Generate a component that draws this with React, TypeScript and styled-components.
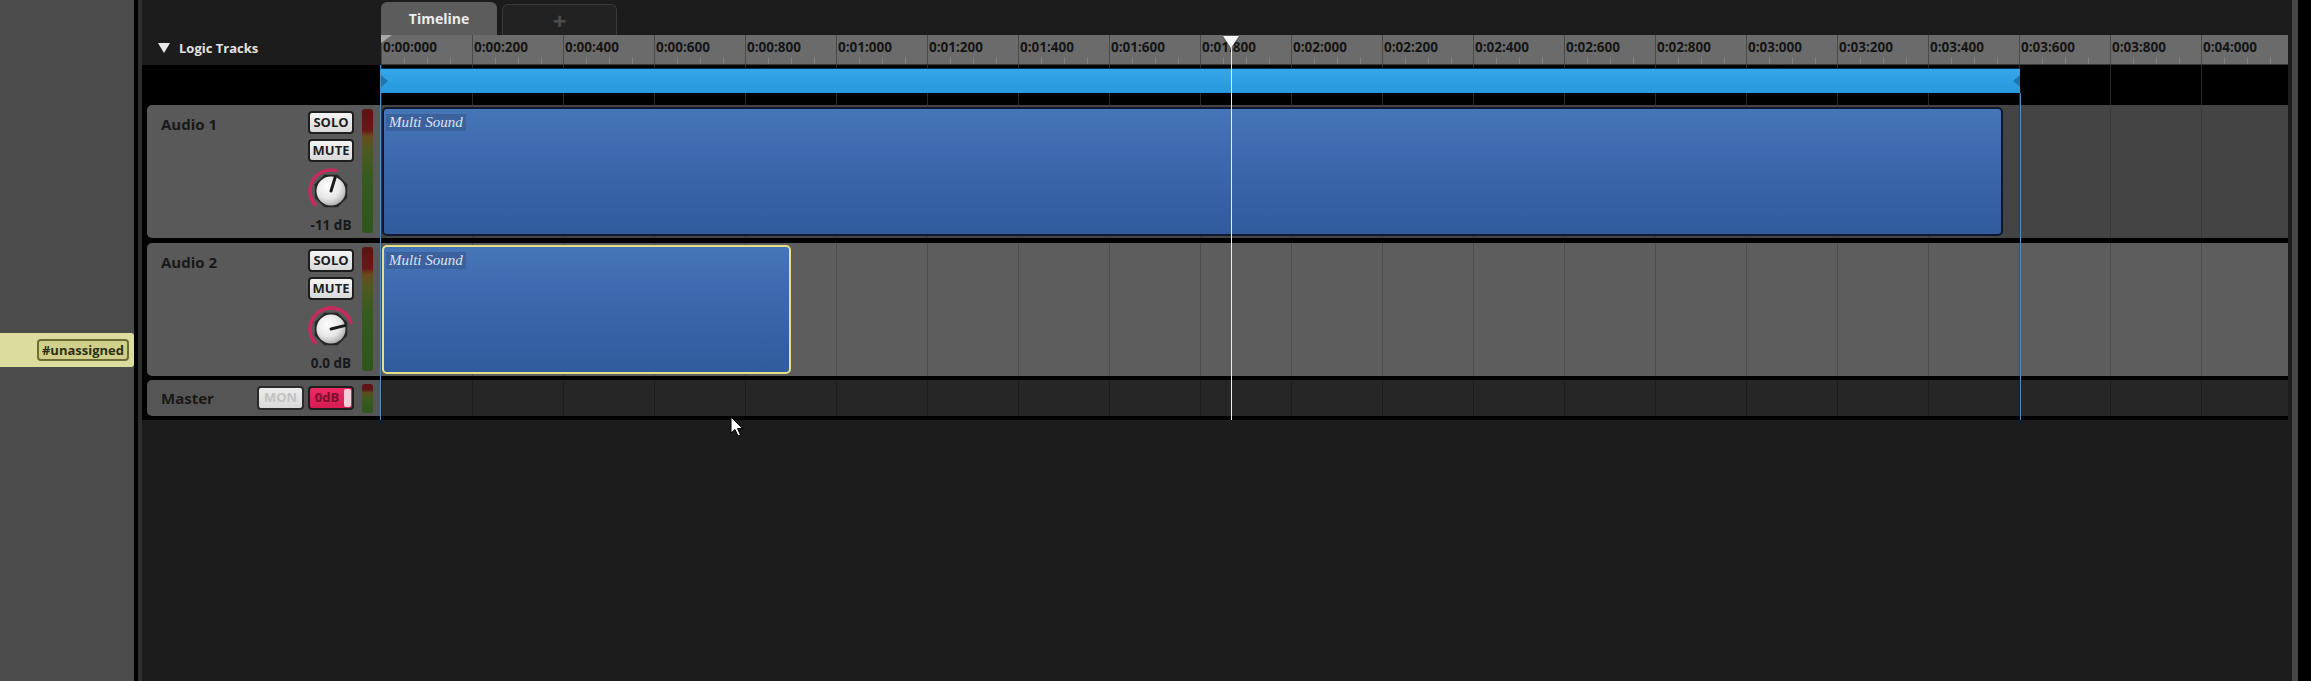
import React from "react";
import styled, { createGlobalStyle } from "styled-components";

const GRID = 91;

const Global = createGlobalStyle`
  html, body { margin: 0; padding: 0; background: #1c1c1c; overflow: hidden; }
  * { box-sizing: border-box; }
`;

const Screen = styled.div`
  position: relative;
  width: 2311px;
  height: 681px;
  display: flex;
  font-family: "Open Sans", "DejaVu Sans", sans-serif;
  overflow: hidden;
`;

const LeftPanel = styled.div`
  width: 134px;
  flex: none;
  background: #4b4b4b;
  display: flex;
  flex-direction: column;
`;

const TagBand = styled.div`
  margin-top: 333px;
  height: 34px;
  background: #dcdc9f;
  display: flex;
  align-items: center;
  justify-content: flex-end;
  padding-right: 5px;
  border-radius: 0 3px 3px 0;
`;

const Tag = styled.span`
  height: 22px;
  padding: 0 3px;
  border: 2px solid #6d6d33;
  border-radius: 4px;
  background: #d0d08c;
  font-weight: 700;
  font-size: 13px;
  line-height: 18px;
  color: #2e2e14;
`;

const Separator = styled.div`
  width: 8px;
  flex: none;
  background: linear-gradient(to right, #000 0 4px, #2e2e2e 4px 8px);
`;

const Main = styled.div`
  position: relative;
  flex: 1;
  min-width: 0;
  display: flex;
  flex-direction: column;
  background: #1c1c1c;
`;

const RightEdge = styled.div`
  width: 23px;
  flex: none;
  background: linear-gradient(to right, #1c1c1c 0 4px, #474747 4px 10px, #000 10px);
`;

const Row = styled.div<{ $h: number; $bg?: string; $mb?: number }>`
  display: flex;
  flex: none;
  height: ${(p) => p.$h}px;
  background: ${(p) => p.$bg ?? "transparent"};
  margin-bottom: ${(p) => p.$mb ?? 0}px;
`;

const Side = styled.div`
  width: 239px;
  flex: none;
  display: flex;
`;

/* Tabs */
const Tabs = styled.div`
  flex: 1;
  display: flex;
  align-items: flex-end;
  gap: 5px;
`;

const TabActive = styled.div`
  width: 116px;
  height: 33px;
  background: #5c5c5c;
  border-radius: 6px 6px 0 0;
  color: #ececec;
  font-weight: 700;
  font-size: 14px;
  display: flex;
  align-items: center;
  justify-content: center;
`;

const TabAdd = styled.div`
  width: 115px;
  height: 31px;
  background: #222;
  border: 1px solid #393939;
  border-bottom: none;
  border-radius: 6px 6px 0 0;
  color: #4d4d4d;
  font-weight: 700;
  font-size: 24px;
  line-height: 31px;
  text-align: center;
`;

/* Ruler row */
const LogicTitle = styled.div`
  display: flex;
  align-items: center;
  height: 24px;
  padding-left: 16px;
  padding-top: 2px;
  gap: 9px;
  color: #e2e2e2;
  font-weight: 700;
  font-size: 13px;
`;

const Caret = styled.span`
  width: 0;
  height: 0;
  border-left: 6px solid transparent;
  border-right: 6px solid transparent;
  border-top: 10px solid #e8e8e8;
`;

const Ruler = styled.div`
  position: relative;
  flex: 1;
  display: flex;
  overflow: hidden;
  background: #6b6b6b;
  border-bottom: 1px solid #3a3a3a;
`;

const RulerCell = styled.div`
  width: ${GRID}px;
  flex: none;
  border-left: 1px solid #4a4a4a;
  padding: 4px 0 0 1px;
  font-size: 13.5px;
  font-weight: 700;
  line-height: 17px;
  color: #151515;
  white-space: nowrap;
  background-image: linear-gradient(
    to right,
    transparent 22px,
    #818181 22px 23px,
    transparent 23px 45px,
    #818181 45px 46px,
    transparent 46px 68px,
    #818181 68px 69px,
    transparent 69px
  );
  background-size: 100% 7px;
  background-position: bottom left;
  background-repeat: no-repeat;
`;

const LoopStartMark = styled.span`
  position: absolute;
  left: 0;
  top: 0;
  width: 0;
  height: 0;
  border-top: 8px solid #a8a8a8;
  border-right: 11px solid transparent;
`;

/* Region row */
const RegionLane = styled.div`
  flex: 1;
  padding-top: 3px;
  background-image: linear-gradient(to right, #2b2b2b 0 1px, transparent 1px);
  background-size: ${GRID}px 100%;
`;

const RegionBar = styled.div`
  position: relative;
  height: 25px;
  background: linear-gradient(#35a6ea, #2698dc);
  border-top: 1px solid #0e3350;
  &::before {
    content: "";
    position: absolute;
    left: 0;
    top: 6px;
    border-left: 7px solid #1b76b0;
    border-top: 6px solid transparent;
    border-bottom: 6px solid transparent;
  }
  &::after {
    content: "";
    position: absolute;
    right: 0;
    top: 6px;
    border-right: 7px solid #1b76b0;
    border-top: 6px solid transparent;
    border-bottom: 6px solid transparent;
  }
`;

/* Tracks */
const TracksBody = styled.div`
  display: flex;
  flex-direction: column;
  background: #000;
  padding-bottom: 4px;
`;

const HeaderWrap = styled.div`
  width: 239px;
  flex: none;
  display: flex;
  padding: 0 1px 0 5px;
`;

const TrackHeader = styled.div<{ $bg: string }>`
  flex: 1;
  display: flex;
  background: ${(p) => p.$bg};
  border-radius: 5px 0 0 5px;
  padding: 0 7px 0 14px;
`;

const TrackName = styled.div<{ $top: number }>`
  flex: 1;
  padding-top: ${(p) => p.$top}px;
  font-size: 15px;
  font-weight: 700;
  line-height: 19px;
  color: #181818;
`;

const Controls = styled.div`
  width: 46px;
  display: flex;
  flex-direction: column;
  align-items: center;
  padding-top: 6px;
  gap: 5px;
`;

const MasterControls = styled.div`
  display: flex;
  gap: 4px;
  padding-top: 6px;
`;

const PillButton = styled.div<{ $w?: number }>`
  width: ${(p) => p.$w ?? 46}px;
  height: 23px;
  flex: none;
  background: linear-gradient(#f4f4f4, #d9d9d9);
  border: 2px solid #1e1e1e;
  border-radius: 4px;
  font-size: 13px;
  font-weight: 700;
  line-height: 19px;
  color: #1e1e1e;
  text-align: center;
`;

const MonButton = styled(PillButton)`
  height: 24px;
  background: linear-gradient(#ececec, #d8d8d8);
  color: #c2c2c2;
  border-color: #2a2a2a;
`;

const ZeroDbButton = styled(PillButton)`
  position: relative;
  height: 24px;
  background: linear-gradient(#ec2c66, #d41c52);
  color: #7e0e2c;
  padding-right: 8px;
  &::after {
    content: "";
    position: absolute;
    right: 1px;
    top: 1px;
    bottom: 1px;
    width: 7px;
    border-radius: 2px;
    background: #f3cfd9;
  }
`;

const DbLabel = styled.div`
  margin-top: -3px;
  font-size: 13.5px;
  font-weight: 700;
  line-height: 14px;
  color: #181818;
  white-space: nowrap;
`;

const Meter = styled.div<{ $h: number }>`
  width: 11px;
  height: ${(p) => p.$h}px;
  margin: 4px 0 0 8px;
  border-radius: 3px;
  background: linear-gradient(
    #5e1212 0%,
    #6a1616 17%,
    #6a4a1e 22%,
    #4f5a22 32%,
    #365a1f 55%,
    #2d561b 100%
  );
`;

const MasterMeter = styled(Meter)`
  background: linear-gradient(#5e1212 0%, #5e1616 20%, #5a4e1e 30%, #3a5a20 55%, #2d561b 100%);
`;

const Lane = styled.div<{ $bg: string; $line: string }>`
  flex: 1;
  padding: 2px 0 0 1px;
  background-color: ${(p) => p.$bg};
  background-image: linear-gradient(to right, ${(p) => p.$line} 0 1px, transparent 1px);
  background-size: ${GRID}px 100%;
`;

const Clip = styled.div<{ $selected?: boolean }>`
  height: 129px;
  border: 2px solid ${(p) => (p.$selected ? "#e4e08a" : "#0f1830")};
  border-radius: 5px;
  background: linear-gradient(#4675b8, #3a66aa 50%, #305c9e);
  padding: 1px 2px;
`;

const ClipLabel = styled.span`
  display: inline-block;
  padding: 0 3px;
  background: rgba(58, 92, 148, 0.75);
  font-family: "Liberation Serif", "DejaVu Serif", serif;
  font-style: italic;
  font-size: 15px;
  line-height: 17px;
  color: #dbe3f1;
`;

/* Overlays */
const TimelineOverlay = styled.div`
  position: absolute;
  top: 0;
  left: 239px;
  right: 0;
  height: 420px;
  pointer-events: none;
`;

const VLine = styled.div<{ $left: number; $top: number; $color: string }>`
  position: absolute;
  left: ${(p) => p.$left}px;
  top: ${(p) => p.$top}px;
  bottom: 0;
  width: 1px;
  background: ${(p) => p.$color};
`;

const PlayheadHead = styled.div<{ $left: number }>`
  position: absolute;
  top: 36px;
  left: ${(p) => p.$left - 8}px;
  width: 0;
  height: 0;
  border-left: 8px solid transparent;
  border-right: 8px solid transparent;
  border-top: 12px solid #f4f4f4;
  filter: drop-shadow(0 0 1px #333);
`;

const Cursor = styled.svg`
  position: absolute;
  left: 730px;
  top: 416px;
`;

type KnobProps = { angle: number };

function polar(r: number, deg: number) {
  const a = ((deg - 90) * Math.PI) / 180;
  return { x: 25 + r * Math.cos(a), y: 25 + r * Math.sin(a) };
}

function Knob({ angle }: KnobProps) {
  const start = -135;
  const s = polar(21, start);
  const e = polar(21, angle);
  const large = angle - start > 180 ? 1 : 0;
  const tip = polar(14, angle);
  const oct = Array.from({ length: 8 }, (_, i) => {
    const p = polar(17.5, i * 45 + 22.5);
    return `${p.x.toFixed(2)},${p.y.toFixed(2)}`;
  }).join(" ");
  return (
    <svg width="50" height="50" viewBox="0 0 50 50" style={{ marginTop: -1 }}>
      <defs>
        <radialGradient id={`kg${angle}`} cx="40%" cy="35%" r="70%">
          <stop offset="0%" stopColor="#ffffff" />
          <stop offset="60%" stopColor="#e6e6e6" />
          <stop offset="100%" stopColor="#a8a8a8" />
        </radialGradient>
      </defs>
      <path
        d={`M ${s.x} ${s.y} A 21 21 0 ${large} 1 ${e.x} ${e.y}`}
        fill="none"
        stroke="#c72a5c"
        strokeWidth="3.5"
      />
      <polygon points={oct} fill="#262626" />
      <circle cx="25" cy="25" r="14.5" fill={`url(#kg${angle})`} />
      <line x1="25" y1="25" x2={tip.x} y2={tip.y} stroke="#1a1a1a" strokeWidth="3" strokeLinecap="round" />
    </svg>
  );
}

const labels = Array.from({ length: 21 }, (_, i) => {
  const ms = i * 200;
  const sec = Math.floor(ms / 1000);
  const rest = ms % 1000;
  return `0:0${sec}:${String(rest).padStart(3, "0")}`;
});

type Track = { name: string; db: string; angle: number; clipWidth: number; selected: boolean; laneBg: string; laneLine: string; mb: number };

const tracks: Track[] = [
  { name: "Audio 1", db: "-11 dB", angle: 17, clipWidth: 1621, selected: false, laneBg: "#444444", laneLine: "#393939", mb: 5 },
  { name: "Audio 2", db: "0.0 dB", angle: 76, clipWidth: 409, selected: true, laneBg: "#5d5d5d", laneLine: "#4c4c4c", mb: 4 },
];

export default function App() {
  return (
    <>
      <Global />
      <Screen>
        <LeftPanel>
          <TagBand>
            <Tag>#unassigned</Tag>
          </TagBand>
        </LeftPanel>
        <Separator />
        <Main>
          <Row $h={35}>
            <Side />
            <Tabs>
              <TabActive>Timeline</TabActive>
              <TabAdd>+</TabAdd>
            </Tabs>
          </Row>
          <Row $h={30}>
            <Side>
              <LogicTitle>
                <Caret />
                Logic Tracks
              </LogicTitle>
            </Side>
            <Ruler>
              {labels.map((l) => (
                <RulerCell key={l}>{l}</RulerCell>
              ))}
              <LoopStartMark />
            </Ruler>
          </Row>
          <Row $h={40} $bg="#000">
            <Side />
            <RegionLane>
              <RegionBar style={{ width: 1639 }} />
            </RegionLane>
          </Row>
          <TracksBody>
            {tracks.map((t) => (
              <Row key={t.name} $h={133} $mb={t.mb}>
                <HeaderWrap>
                  <TrackHeader $bg="#595959">
                    <TrackName $top={10}>{t.name}</TrackName>
                    <Controls>
                      <PillButton>SOLO</PillButton>
                      <PillButton>MUTE</PillButton>
                      <Knob angle={t.angle} />
                      <DbLabel>{t.db}</DbLabel>
                    </Controls>
                    <Meter $h={124} />
                  </TrackHeader>
                </HeaderWrap>
                <Lane $bg={t.laneBg} $line={t.laneLine}>
                  <Clip $selected={t.selected} style={{ width: t.clipWidth }}>
                    <ClipLabel>Multi Sound</ClipLabel>
                  </Clip>
                </Lane>
              </Row>
            ))}
            <Row $h={36}>
              <HeaderWrap>
                <TrackHeader $bg="#555555">
                  <TrackName $top={9}>Master</TrackName>
                  <MasterControls>
                    <MonButton $w={47}>MON</MonButton>
                    <ZeroDbButton>0dB</ZeroDbButton>
                  </MasterControls>
                  <MasterMeter $h={29} />
                </TrackHeader>
              </HeaderWrap>
              <Lane $bg="#262626" $line="#1c1c1c" />
            </Row>
          </TracksBody>
          <TimelineOverlay>
            <VLine $left={-1} $top={65} $color="#4f8fc2" />
            <VLine $left={1639} $top={93} $color="#4f8fc2" />
            <VLine $left={850} $top={40} $color="#eeeeee" />
            <PlayheadHead $left={850} />
          </TimelineOverlay>
        </Main>
        <RightEdge />
        <Cursor width="14" height="22" viewBox="0 0 14 22">
          <path d="M1 1 L1 17 L5 13.5 L8 20 L10.5 19 L7.5 12.5 L12.5 12.5 Z" fill="#fff" stroke="#000" strokeWidth="1" strokeLinejoin="round" />
        </Cursor>
      </Screen>
    </>
  );
}
